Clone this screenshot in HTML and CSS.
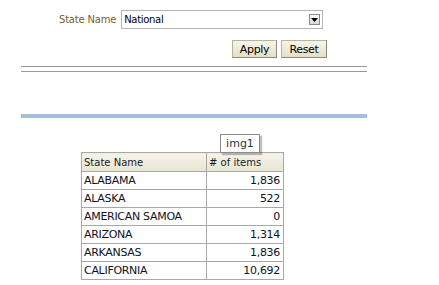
FILE: index.html
```html
<!DOCTYPE html>
<html lang="en">
<head>
    <meta charset="UTF-8">
    <title>State Items</title>
    <link rel="stylesheet" href="styles.css">
</head>
<body>
    <div class="page">
        <div class="prompt">
            <label for="stateName">State Name</label>
            <div class="select-box" id="stateName">
                <span>National</span>
                <span class="select-arrow">
                    <svg width="7" height="4" viewBox="0 0 7 4"><polygon points="0,0 7,0 3.5,4" fill="#000"/></svg>
                </span>
            </div>
        </div>
        <div class="prompt-buttons">
            <button type="button">Apply</button>
            <button type="button">Reset</button>
        </div>
        <div class="rule"></div>
        <div class="rule"></div>
        <div class="section-bar"></div>

        <div class="table-wrap">
            <div class="tooltip">img1</div>
            <table>
                <thead>
                    <tr>
                        <th class="col-state">State Name</th>
                        <th class="col-items"># of items</th>
                    </tr>
                </thead>
                <tbody>
                    <tr><td>ALABAMA</td><td class="num">1,836</td></tr>
                    <tr><td>ALASKA</td><td class="num">522</td></tr>
                    <tr><td>AMERICAN SAMOA</td><td class="num">0</td></tr>
                    <tr><td>ARIZONA</td><td class="num">1,314</td></tr>
                    <tr><td>ARKANSAS</td><td class="num">1,836</td></tr>
                    <tr><td>CALIFORNIA</td><td class="num">10,692</td></tr>
                </tbody>
            </table>
        </div>
    </div>
</body>
</html>
```

FILE: styles.css
```css
body {
    margin: 0;
    background-color: #fff;
    font-family: "DejaVu Sans", Verdana, sans-serif;
    font-size: 10px;
    color: #1a1a1a;
}
.page {
    margin-left: 21px;
    width: 346px;
    padding-top: 10px;
}
.prompt {
    display: flex;
    align-items: center;
    padding-left: 38px;
    gap: 5px;
}
.prompt label {
    color: #76602a;
    letter-spacing: -0.2px;
}
.select-box {
    display: flex;
    align-items: center;
    justify-content: space-between;
    box-sizing: border-box;
    width: 202px;
    height: 19px;
    border: 1px solid #b4b4b4;
    padding: 0 2px 0 2px;
    color: #000;
    letter-spacing: -0.3px;
}
.select-arrow {
    display: flex;
    align-items: center;
    justify-content: center;
    box-sizing: border-box;
    width: 11px;
    height: 11px;
    border: 1px solid #8a8a8a;
    background: linear-gradient(#fdfdfd, #d8d8d8);
}
.prompt-buttons {
    display: flex;
    gap: 4px;
    padding-left: 211px;
    margin-top: 11px;
}
.prompt-buttons button {
    box-sizing: border-box;
    height: 18px;
    padding: 0;
    border: 1px solid #b8b49a;
    border-right-color: #8e8a74;
    border-bottom-color: #8e8a74;
    background: linear-gradient(#f7f5ea, #e3dfc7);
    font-family: "DejaVu Sans", Verdana, sans-serif;
    font-size: 11px;
    letter-spacing: -0.3px;
    color: #000;
}
.prompt-buttons button:first-child {
    width: 45px;
}
.prompt-buttons button:last-child {
    width: 46px;
}
.rule {
    height: 0;
    border-top: 1px solid #9c9c94;
    margin-top: 4px;
}
.prompt-buttons + .rule {
    margin-top: 8px;
}
.section-bar {
    height: 4px;
    margin-top: 42px;
    background-color: #a5bfd8;
}
.table-wrap {
    position: relative;
    margin-left: 60px;
    margin-top: 34px;
    width: 203px;
}
.tooltip {
    position: absolute;
    left: 139px;
    top: -18px;
    box-sizing: border-box;
    width: 40px;
    height: 19px;
    line-height: 17px;
    text-align: center;
    background-color: #fff;
    border: 1px solid #8c8c8c;
    box-shadow: 2px 2px 1px rgba(0, 0, 0, 0.25);
    font-size: 11px;
    color: #333;
}
table {
    border-collapse: collapse;
}
th, td {
    border: 1px solid #a8a8a8;
    padding: 0 3px 0 2px;
    text-align: left;
    white-space: nowrap;
}
th {
    height: 18px;
    font-weight: normal;
    background: linear-gradient(#f6f4ea, #e8e5d2);
    color: #1a1a2a;
}
td {
    height: 17px;
    font-size: 11px;
    letter-spacing: -0.3px;
    color: #10101c;
}
.col-state {
    width: 119px;
}
.col-items {
    width: 71px;
}
td.num {
    text-align: right;
}
```
